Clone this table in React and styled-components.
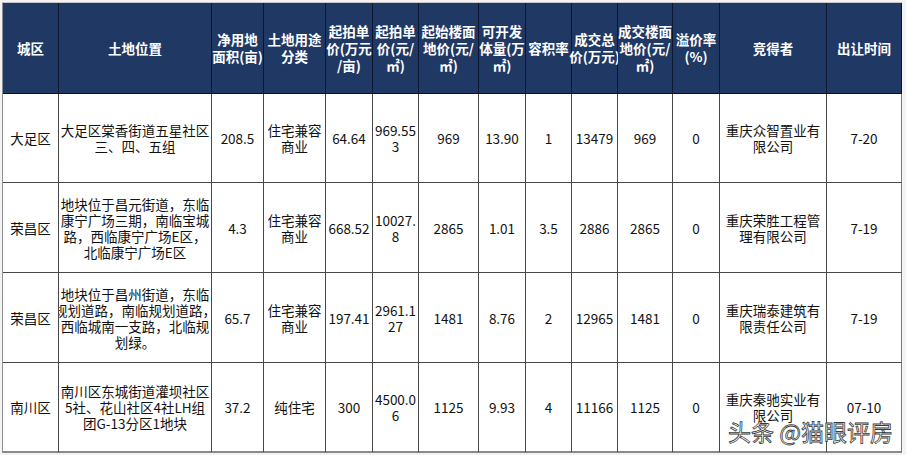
import React from "react";
import styled, { createGlobalStyle } from "styled-components";

const GlobalStyle = createGlobalStyle`
  body {
    margin: 0;
    background: #f3f3f3;
    font-family: "Noto Sans CJK SC", "Noto Sans", sans-serif;
  }
`;

const Page = styled.div`
  position: relative;
  width: 906px;
  height: 455px;
  padding: 2px 0 0 2px;
  box-sizing: border-box;
  overflow: hidden;
`;

const Grid = styled.div`
  display: grid;
  grid-template-columns: 56px 153px 52px 62px 47px 46px 60px 47px 46px 46px 55px 47px 107px 75px;
  grid-template-rows: 91px 89px 90px 90px 90px;
  width: max-content;
  border-left: 1px solid #8e8e8e;
  border-top: 1px solid #c8c8c8;
`;

const HeadCell = styled.div`
  display: flex;
  align-items: center;
  justify-content: center;
  box-sizing: border-box;
  background: #1f3864;
  color: #fff;
  font-weight: 700;
  font-size: 13.5px;
  line-height: 17px;
  text-align: center;
  white-space: pre;
  border-right: 1px solid #0b1631;
  border-bottom: 1px solid #101010;
`;

const Cell = styled.div`
  display: flex;
  align-items: center;
  justify-content: center;
  box-sizing: border-box;
  background: #fff;
  color: #111;
  font-size: 13.5px;
  line-height: 16px;
  text-align: center;
  white-space: pre;
  overflow: hidden;
  border-right: 1px solid ${(p) => (p.$last ? "#7a7a7a" : "#474747")};
  border-bottom: ${(p) => (p.$bottom ? "2px solid #8a8a8a" : "1px solid #474747")};
`;

const Watermark = styled.div`
  position: absolute;
  left: 728px;
  top: 416px;
  font-size: 23px;
  line-height: 30px;
  color: #fff;
  -webkit-text-stroke: 0.8px #3a3a3a;
  white-space: nowrap;
`;

const headers = [
  "城区",
  "土地位置",
  "净用地\n面积(亩)",
  "土地用途\n分类",
  "起拍单\n价(万元\n/亩)",
  "起拍单\n价(元/\n㎡)",
  "起始楼面\n地价(元/\n㎡)",
  "可开发\n体量(万\n㎡)",
  "容积率",
  "成交总\n价(万元)",
  "成交楼面\n地价(元/\n㎡)",
  "溢价率\n(%)",
  "竞得者",
  "出让时间",
];

const rows = [
  [
    "大足区",
    "大足区棠香街道五星社区\n三、四、五组",
    "208.5",
    "住宅兼容\n商业",
    "64.64",
    "969.55\n3",
    "969",
    "13.90",
    "1",
    "13479",
    "969",
    "0",
    "重庆众智置业有\n限公司",
    "7-20",
  ],
  [
    "荣昌区",
    "地块位于昌元街道，东临\n康宁广场三期，南临宝城\n路，西临康宁广场E区，\n北临康宁广场E区",
    "4.3",
    "住宅兼容\n商业",
    "668.52",
    "10027.\n8",
    "2865",
    "1.01",
    "3.5",
    "2886",
    "2865",
    "0",
    "重庆荣胜工程管\n理有限公司",
    "7-19",
  ],
  [
    "荣昌区",
    "地块位于昌州街道，东临\n规划道路，南临规划道路，\n西临城南一支路，北临规\n划绿。",
    "65.7",
    "住宅兼容\n商业",
    "197.41",
    "2961.1\n27",
    "1481",
    "8.76",
    "2",
    "12965",
    "1481",
    "0",
    "重庆瑞泰建筑有\n限责任公司",
    "7-19",
  ],
  [
    "南川区",
    "南川区东城街道灌坝社区\n5社、花山社区4社LH组\n团G-13分区1地块",
    "37.2",
    "纯住宅",
    "300",
    "4500.0\n6",
    "1125",
    "9.93",
    "4",
    "11166",
    "1125",
    "0",
    "重庆秦驰实业有\n限公司",
    "07-10",
  ],
];

const App = () => {
  return (
    <>
      <GlobalStyle />
      <Page>
        <Grid>
          {headers.map((h) => (
            <HeadCell key={h}>{h}</HeadCell>
          ))}
          {rows.map((row, r) =>
            row.map((text, c) => (
              <Cell
                key={`${r}-${c}`}
                $last={c === row.length - 1}
                $bottom={r === rows.length - 1}
              >
                {text}
              </Cell>
            ))
          )}
        </Grid>
        <Watermark>头条 @猫眼评房</Watermark>
      </Page>
    </>
  );
};

export default App;
